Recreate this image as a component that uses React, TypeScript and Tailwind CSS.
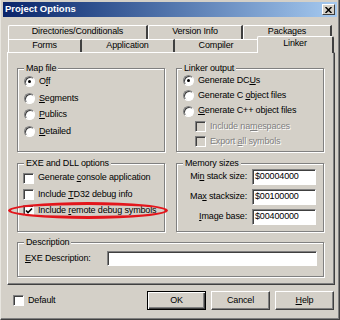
import React from "react";

const Radio = ({ on }: { on?: boolean }) => (
  <div className="relative w-[11px] h-[11px] shrink-0 rounded-full bg-white border border-t-[#808080] border-l-[#808080] border-r-white border-b-white shadow-[inset_1px_1px_0_#404040]">
    {on && <div className="absolute left-[3px] top-[3px] w-[3px] h-[3px] rounded-full bg-black" />}
  </div>
);

const Check = ({ on, disabled }: { on?: boolean; disabled?: boolean }) => (
  <div
    className={
      "relative w-[11px] h-[11px] shrink-0 border border-t-[#808080] border-l-[#808080] border-r-white border-b-white shadow-[inset_1px_1px_0_#404040] " +
      (disabled ? "bg-[#d4d0c8]" : "bg-white")
    }
  >
    {on && (
      <svg className="absolute left-[1px] top-[1px]" width="8" height="8" viewBox="0 0 8 8">
        <path d="M1 3.5 L3 5.5 L7 1.5" stroke="black" strokeWidth="1.6" fill="none" />
      </svg>
    )}
  </div>
);

const Group = ({
  label,
  className,
  children,
  labelLeft = "left-[6px]",
}: {
  label: string;
  className: string;
  children?: React.ReactNode;
  labelLeft?: string;
}) => (
  <div className={"relative border border-[#808080] shadow-[inset_1px_1px_0_white,1px_1px_0_white] " + className}>
    <div className={"absolute -top-[7px] px-[2px] bg-[#d4d0c8] leading-[12px] " + labelLeft}>{label}</div>
    {children}
  </div>
);

const Edit = ({ value, className }: { value?: string; className: string }) => (
  <div
    className={
      "bg-white border border-t-[#808080] border-l-[#808080] border-r-white border-b-white shadow-[inset_1px_1px_0_#404040] flex items-center pl-[2px] " +
      className
    }
  >
    {value}
  </div>
);

const Button = ({ children, def }: { children: React.ReactNode; def?: boolean }) => (
  <div
    className={
      "w-[59px] h-[19px] flex items-center justify-center bg-[#d4d0c8] " +
      (def
        ? "border border-black shadow-[inset_1px_1px_0_white,inset_-1px_-1px_0_#404040,inset_-2px_-2px_0_#808080]"
        : "border border-t-white border-l-white border-r-[#404040] border-b-[#404040] shadow-[inset_-1px_-1px_0_#808080]")
    }
  >
    {children}
  </div>
);

const TabBack = ({ w, children }: { w: string; children: React.ReactNode }) => (
  <div
    className={
      "h-[14px] flex items-start justify-center leading-[11px] border-l border-t border-l-white border-t-white border-r-[2px] border-r-[#404040] rounded-tl-[2px] " +
      w
    }
  >
    {children}
  </div>
);

export default function App() {
  return (
    <div className="relative w-[340px] h-[320px] overflow-hidden bg-[#d4d0c8] text-black text-[9px] tracking-[-0.15px] font-['Liberation_Sans',Arial,sans-serif] border-l border-l-[#e8e6e0] border-r border-b border-r-[#404040] border-b-[#404040] shadow-[inset_-1px_-1px_0_#808080]">
      {/* title bar */}
      <div className="mt-[2px] ml-[2px] w-[334px] h-[15px] flex items-center bg-gradient-to-r from-[#0a246a] to-[#a6caf0] pl-[2px] pr-[2px]">
        <span className="text-white font-bold text-[9.5px] tracking-normal">Project Options</span>
        <div className="ml-auto w-[13px] h-[11px] bg-[#d4d0c8] border border-t-white border-l-white border-r-[#404040] border-b-[#404040] flex items-center justify-center">
          <svg width="7" height="6" viewBox="0 0 7 6">
            <path d="M0.5 0 L6.5 6 M6.5 0 L0.5 6" stroke="black" strokeWidth="1.5" />
          </svg>
        </div>
      </div>

      {/* tab rows */}
      <div className="ml-[7px] mt-[8px] flex">
        <TabBack w="w-[140px]">Directories/Conditionals</TabBack>
        <TabBack w="w-[95px]">Version Info</TabBack>
        <TabBack w="w-[89px]">Packages</TabBack>
      </div>
      <div className="ml-[7px] -mb-[1px] h-[13px] flex items-end relative z-10 leading-[11px]">
        <div className="w-[74px] h-[13px] flex items-start justify-center border-l border-t border-l-white border-t-white border-r-[2px] border-r-[#404040]">
          Forms
        </div>
        <div className="w-[93px] h-[13px] flex items-start justify-center border-t border-t-white border-r-[2px] border-r-[#404040]">
          Application
        </div>
        <div className="w-[82px] h-[13px] flex items-start justify-center border-t border-t-white">
          Compiler
        </div>
        <div className="w-[77px] h-[17px] -mb-[1px] bg-[#d4d0c8] flex items-start justify-center pt-[1px] border-l border-t border-l-white border-t-white border-r-[2px] border-r-[#404040] rounded-tl-[2px] rounded-tr-[2px]">
          Linker
        </div>
      </div>

      {/* panel */}
      <div className="mt-[1px] ml-[6px] w-[328px] h-[233px] border border-t-white border-l-white border-r-[#404040] border-b-[#404040] shadow-[inset_-1px_-1px_0_#808080] pl-[9px] pt-[15px] flex flex-col">
        <div className="flex gap-[11px]">
          <Group label="Map file" className="w-[148px] h-[84px] pt-[4.5px] pl-[6px]">
            <div className="h-[16.5px] flex items-center gap-[4px]">
              <Radio on />
              <span>
                O<u>f</u>f
              </span>
            </div>
            <div className="h-[16.5px] flex items-center gap-[4px]">
              <Radio />
              <span>
                <u>S</u>egments
              </span>
            </div>
            <div className="h-[16.5px] flex items-center gap-[4px]">
              <Radio />
              <span>
                <u>P</u>ublics
              </span>
            </div>
            <div className="h-[16.5px] flex items-center gap-[4px]">
              <Radio />
              <span>
                <u>D</u>etailed
              </span>
            </div>
          </Group>
          <Group label="Linker output" className="w-[148px] h-[84px] pt-[4px] pl-[6px]" labelLeft="left-[5px]">
            <div className="h-[15.3px] flex items-center gap-[4px]">
              <Radio on />
              <span>
                Generate DC<u>U</u>s
              </span>
            </div>
            <div className="h-[15.3px] flex items-center gap-[4px]">
              <Radio />
              <span>
                Generate C <u>o</u>bject files
              </span>
            </div>
            <div className="h-[15.3px] flex items-center gap-[4px]">
              <Radio />
              <span>
                <u>G</u>enerate C++ object files
              </span>
            </div>
            <div className="h-[15.3px] flex items-center gap-[4px] pl-[12px] text-[#808080] [text-shadow:1px_1px_0_white]">
              <Check disabled />
              <span>
                Include na<u>m</u>espaces
              </span>
            </div>
            <div className="h-[15.3px] flex items-center gap-[4px] pl-[12px] text-[#808080] [text-shadow:1px_1px_0_white]">
              <Check disabled />
              <span>
                Export <u>a</u>ll symbols
              </span>
            </div>
          </Group>
        </div>

        <div className="flex gap-[11px] mt-[11px]">
          <Group label="EXE and DLL options" className="w-[148px] h-[69px] pt-[6px] pl-[5px]">
            <div className="h-[16.3px] flex items-center gap-[4px]">
              <Check />
              <span>
                Generate <u>c</u>onsole application
              </span>
            </div>
            <div className="h-[16.3px] flex items-center gap-[4px]">
              <Check />
              <span>
                Include <u>T</u>D32 debug info
              </span>
            </div>
            <div className="h-[16.3px] flex items-center gap-[4px]">
              <Check on />
              <span>
                Include <u>r</u>emote debug symbols
              </span>
            </div>
          </Group>
          <Group label="Memory sizes" className="w-[148px] h-[69px] pt-[5px] flex flex-col gap-[4px]" labelLeft="left-[6px]">
            <div className="h-[16px] flex items-center gap-[5px]">
              <span className="w-[70px] text-right">
                Mi<u>n</u> stack size:
              </span>
              <Edit value="$00004000" className="w-[64px] h-[16px]" />
            </div>
            <div className="h-[16px] flex items-center gap-[5px]">
              <span className="w-[70px] text-right">
                Ma<u>x</u> stacksize:
              </span>
              <Edit value="$00100000" className="w-[64px] h-[16px]" />
            </div>
            <div className="h-[16px] flex items-center gap-[5px]">
              <span className="w-[70px] text-right">
                <u>I</u>mage base:
              </span>
              <Edit value="$00400000" className="w-[64px] h-[16px]" />
            </div>
          </Group>
        </div>

        <Group label="Description" className="mt-[10px] w-[307px] h-[35px] pt-[8px] pl-[7px] flex items-start">
          <span className="w-[82px] h-[15px] flex items-center">
            <u>E</u>XE Description:
          </span>
          <Edit className="w-[210px] h-[15px]" />
        </Group>
      </div>

      {/* bottom row */}
      <div className="mt-[6px] h-[19px] flex items-center pl-[12px] pr-[5px]">
        <Check />
        <span className="ml-[4px]">Default</span>
        <div className="ml-auto flex gap-[5px]">
          <Button def>OK</Button>
          <Button>Cancel</Button>
          <Button>
            <span>
              <u>H</u>elp
            </span>
          </Button>
        </div>
      </div>

      {/* red annotation ellipse */}
      <div className="absolute left-[7px] top-[202px] w-[160px] h-[17px] rounded-[50%] border-[3px] border-[#e3161c]" />
    </div>
  );
}
